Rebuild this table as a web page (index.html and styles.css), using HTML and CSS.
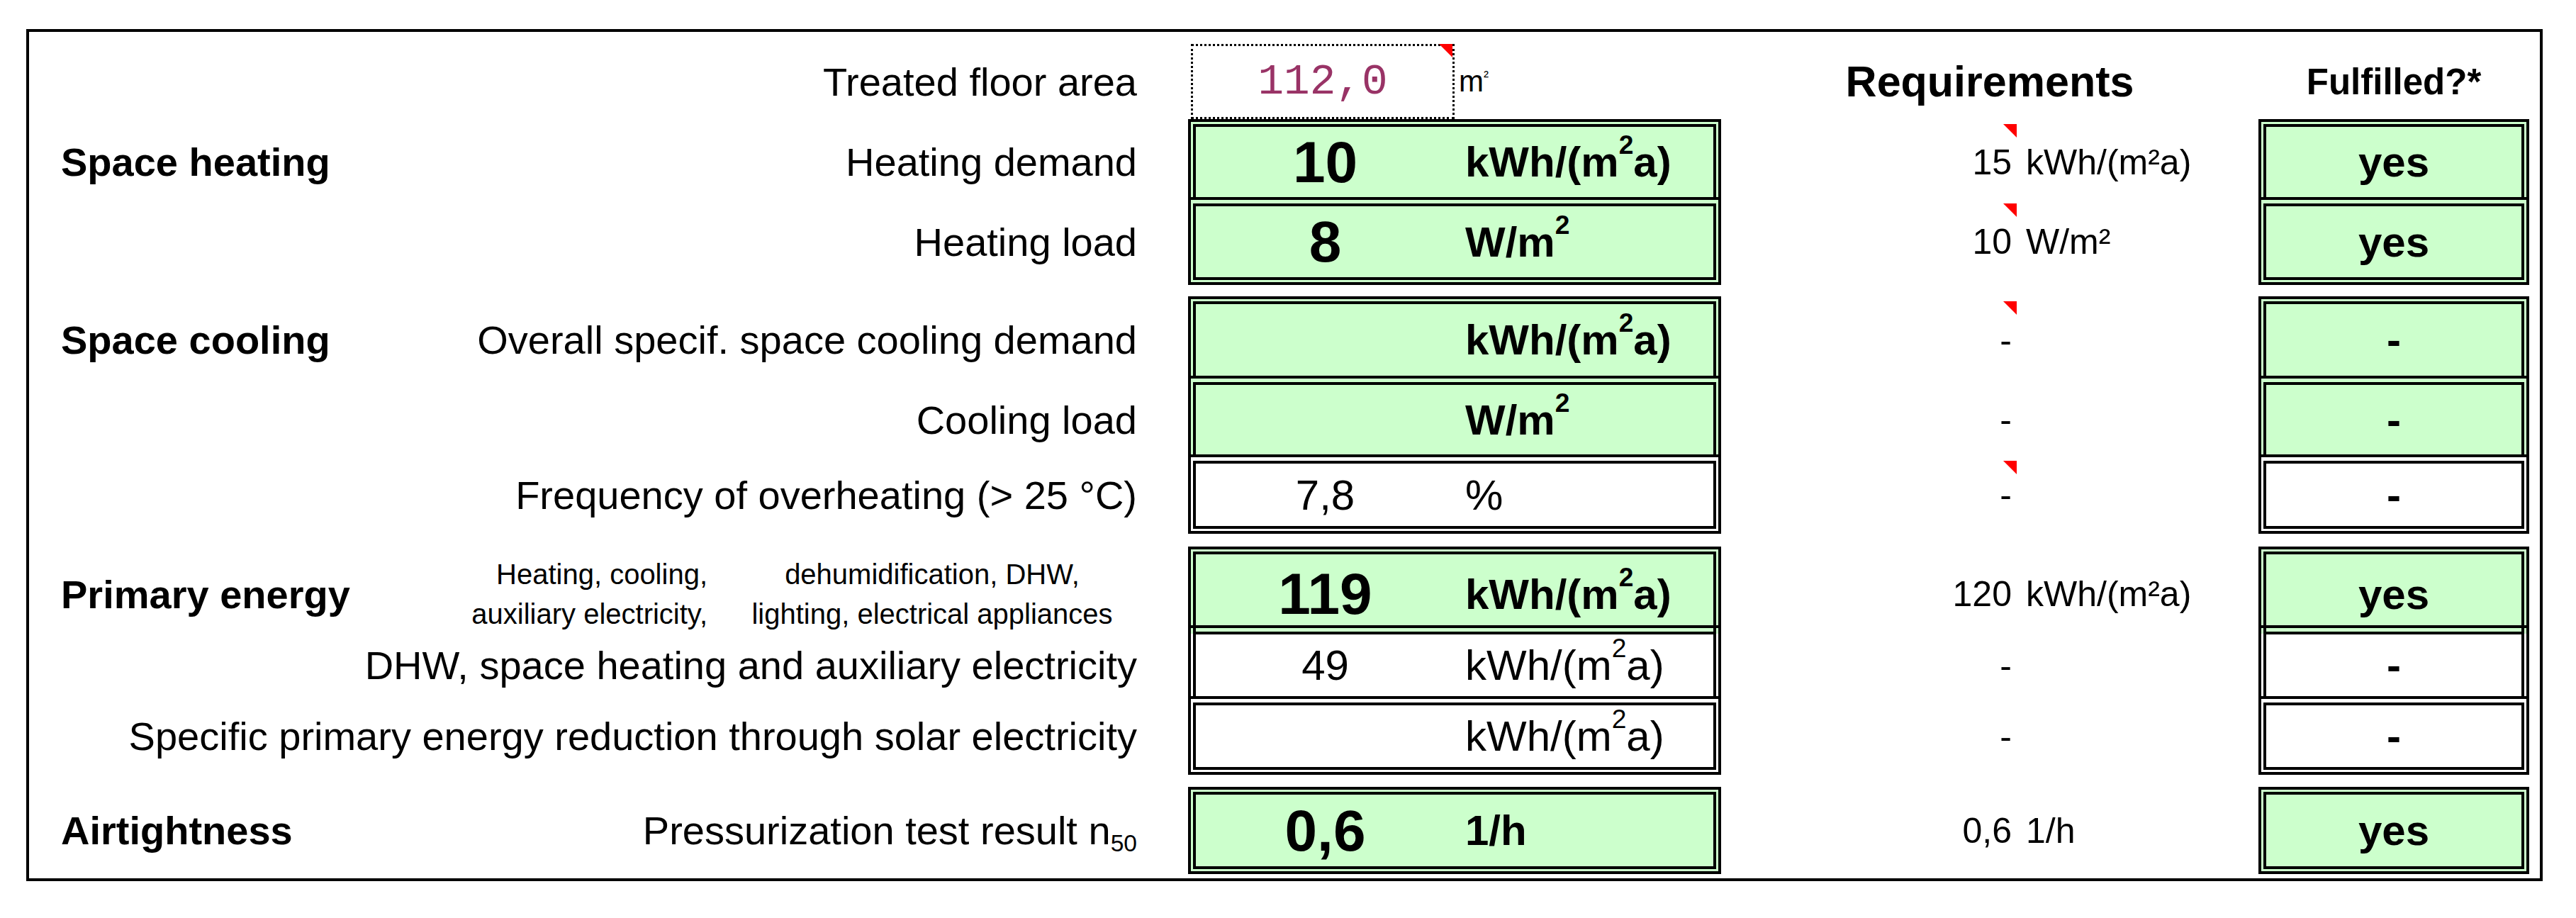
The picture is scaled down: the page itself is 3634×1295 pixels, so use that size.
FILE: index.html
```html
<!DOCTYPE html>
<html>
<head>
	<title>Verification</title>
	<link rel="stylesheet" href="styles.css">
</head>
<body>
	<div class="sheet">
		<div class="row head">
			<div class="label"><span class="desc">Treated floor area</span></div>
			<div class="val">
				<div class="input">112,0<i class="flag"></i></div>
				<div class="area-unit">m<sup>²</sup></div>
			</div>
			<div class="req">Requirements</div>
			<div class="ful">Fulfilled?*</div>
		</div>

		<div class="group g-heat">
			<div class="row first">
				<div class="label"><span class="sect">Space heating</span><span class="desc">Heating demand</span></div>
				<div class="val box green"><span class="num">10</span><span class="unit">kWh/(m<sup>2</sup>a)</span></div>
				<div class="req"><span class="rnum">15</span><span class="runit">kWh/(m²a)</span><i class="flag"></i></div>
				<div class="ful box green">yes</div>
			</div>
			<div class="row next last">
				<div class="label"><span class="sect"></span><span class="desc">Heating load</span></div>
				<div class="val box green"><span class="num">8</span><span class="unit">W/m<sup>2</sup></span></div>
				<div class="req"><span class="rnum">10</span><span class="runit">W/m²</span><i class="flag"></i></div>
				<div class="ful box green">yes</div>
			</div>
		</div>

		<div class="group g-cool">
			<div class="row first">
				<div class="label"><span class="sect">Space cooling</span><span class="desc">Overall specif. space cooling demand</span></div>
				<div class="val box green"><span class="num"></span><span class="unit">kWh/(m<sup>2</sup>a)</span></div>
				<div class="req"><span class="rnum">-</span><span class="runit"></span><i class="flag"></i></div>
				<div class="ful box green">-</div>
			</div>
			<div class="row next">
				<div class="label"><span class="sect"></span><span class="desc">Cooling load</span></div>
				<div class="val box green"><span class="num"></span><span class="unit">W/m<sup>2</sup></span></div>
				<div class="req"><span class="rnum">-</span><span class="runit"></span></div>
				<div class="ful box green">-</div>
			</div>
			<div class="row next last">
				<div class="label"><span class="sect"></span><span class="desc">Frequency of overheating (&gt; 25 °C)</span></div>
				<div class="val box"><span class="num">7,8</span><span class="unit">%</span></div>
				<div class="req"><span class="rnum">-</span><span class="runit"></span><i class="flag"></i></div>
				<div class="ful box">-</div>
			</div>
		</div>

		<div class="group g-primary">
			<div class="row first">
				<div class="label">
					<span class="sect">Primary energy</span>
					<span class="note">
						<span class="c1">Heating, cooling,<br>auxiliary electricity,</span>
						<span class="c2">dehumidification, DHW,<br>lighting, electrical appliances</span>
					</span>
				</div>
				<div class="val box green"><span class="num">119</span><span class="unit">kWh/(m<sup>2</sup>a)</span></div>
				<div class="req"><span class="rnum">120</span><span class="runit">kWh/(m²a)</span></div>
				<div class="ful box green">yes</div>
			</div>
			<div class="row next">
				<div class="label"><span class="sect"></span><span class="desc">DHW, space heating and auxiliary electricity</span></div>
				<div class="val box"><span class="num">49</span><span class="unit">kWh/(m<sup>2</sup>a)</span></div>
				<div class="req"><span class="rnum">-</span><span class="runit"></span></div>
				<div class="ful box">-</div>
			</div>
			<div class="row next last">
				<div class="label"><span class="sect"></span><span class="desc">Specific primary energy reduction through solar electricity</span></div>
				<div class="val box"><span class="num"></span><span class="unit">kWh/(m<sup>2</sup>a)</span></div>
				<div class="req"><span class="rnum">-</span><span class="runit"></span></div>
				<div class="ful box">-</div>
			</div>
		</div>

		<div class="group g-air">
			<div class="row first last">
				<div class="label"><span class="sect">Airtightness</span><span class="desc">Pressurization test result n<sub>50</sub></span></div>
				<div class="val box green"><span class="num">0,6</span><span class="unit">1/h</span></div>
				<div class="req"><span class="rnum">0,6</span><span class="runit">1/h</span></div>
				<div class="ful box green">yes</div>
			</div>
		</div>
	</div>
</body>
</html>
```

FILE: styles.css
```css
body { margin: 0; background: #fff; color: #000; font-family: "Liberation Sans", Arial, sans-serif; }

.sheet { margin: 41px 0 0 37px; width: 3550px; height: 1202px; box-sizing: border-box; border: 4px solid #000; }

.row { display: grid; grid-template-columns: 1635px 752px 758px 382px; }
.row > div { box-sizing: border-box; border: 0 solid transparent; }
.first > div { border-top-width: 11px; }
.next > div { border-top-width: 13px; }
.last > div { border-bottom-width: 11px; }

.group { display: grid; margin-top: 17px; }
.g-heat { margin-top: 0; grid-template-rows: 110px 124px; }
.g-cool { margin-top: 16px; grid-template-rows: 112px 111px 112px; }
.g-primary { margin-top: 18px; grid-template-rows: 111px 100px 111px; }
.g-air { grid-template-rows: 123px; }

/* double ruled boxes, like the sheet's cell borders */
.row > .box { border-style: double; border-color: #000; border-left-width: 11px; border-right-width: 11px; }
.green { background: #ccffcc; }

/* header line */
.head { height: 106px; margin-top: 17px; }
.head > div { display: flex; align-items: center; }
.head .label { justify-content: flex-end; }
.head .val { align-items: stretch; }
.head .req { justify-content: center; font-size: 61px; font-weight: bold; }
.head .ful { justify-content: center; font-size: 51px; font-weight: bold; }
.input { position: relative; margin-left: 4px; width: 372px; box-sizing: border-box; border: 3px dotted #000;
	display: flex; align-items: center; justify-content: center;
	font-family: "Liberation Mono", "Courier New", monospace; font-size: 61px; color: #993366; }
.input .flag { top: -3px; right: 0; left: auto; }
.area-unit { padding-left: 6px; font-size: 42px; align-self: center; }
.area-unit sup { font-size: 50%; vertical-align: 14px; line-height: 0; }

/* labels */
.label { display: flex; align-items: center; justify-content: space-between; padding: 0 72px 0 45px; font-size: 56px; }
.sect { font-weight: bold; }
.note { display: grid; grid-template-columns: 360px 560px; column-gap: 37px; margin-right: 9px; font-size: 40px; line-height: 56px; }
.note .c1 { text-align: right; }
.note .c2 { text-align: center; }
sub { font-size: 60%; vertical-align: -10px; line-height: 0; }

/* value box */
.val { display: grid; grid-template-columns: 365px 1fr; align-items: center; font-size: 60px; }
.num { text-align: center; }
.unit { padding-left: 15px; }
.unit sup { font-size: 62%; vertical-align: 32px; line-height: 0; }
.green .num { font-size: 82px; font-weight: bold; }
.green .unit { font-weight: bold; }

/* requirement */
.req { position: relative; display: grid; grid-template-columns: 417px 1fr; align-items: center; font-size: 50px; }
.rnum { text-align: right; padding-right: 7px; }
.runit { padding-left: 13px; }
.flag { position: absolute; top: -4px; left: 398px; width: 0; height: 0; border-top: 19px solid #f00; border-left: 19px solid transparent; }

/* fulfilled */
.ful { display: flex; align-items: center; justify-content: center; font-size: 60px; font-weight: bold; }
```
